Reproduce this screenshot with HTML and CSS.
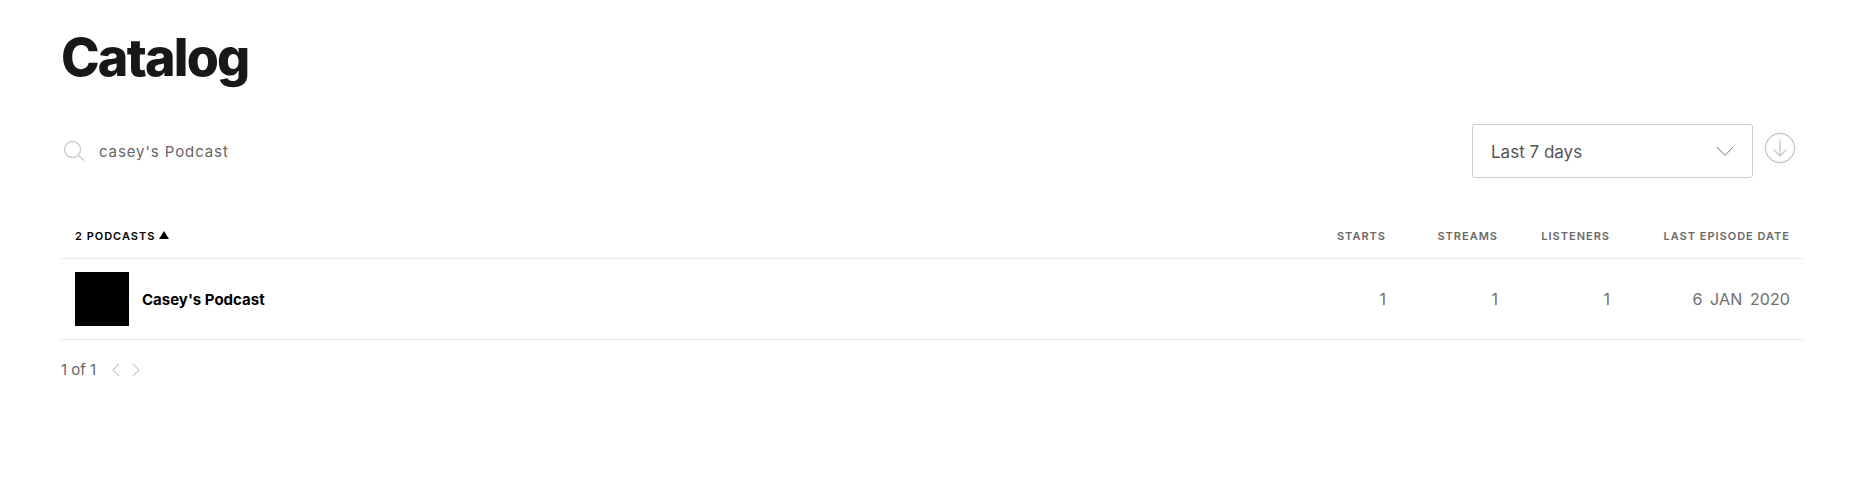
FILE: index.html
```html
<!DOCTYPE html>
<html lang="en">
<head>
    <meta charset="UTF-8">
    <title>Catalog</title>
    <link rel="stylesheet" href="styles.css">
</head>
<body>

<div class="pagina">
    <h1 class="titulo">Catalog</h1>

    <div class="filtros">
        <div class="buscador">
            <svg class="icono-buscar" width="22" height="22" viewBox="0 0 22 22" fill="none" stroke="#ccc" stroke-width="1.4">
                <circle cx="9.5" cy="9.5" r="8"/>
                <path d="M15.2 15.2 L21 20.5"/>
            </svg>
            <span class="busqueda">casey's Podcast</span>
        </div>
        <div class="acciones">
            <div class="selector">
                <span>Last 7 days</span>
                <svg width="18" height="10" viewBox="0 0 18 10" fill="none" stroke="#777" stroke-width="1">
                    <path d="M1 1 L9 9.5 L17 1"/>
                </svg>
            </div>
            <svg class="descarga" width="32" height="32" viewBox="0 0 32 32" fill="none" stroke="#ccc" stroke-width="1.4">
                <circle cx="16" cy="16" r="14.5"/>
                <path d="M16 7.5 V23.5 M9.5 17.5 L16 24 L22.5 17.5"/>
            </svg>
        </div>
    </div>

    <div class="fila cabecera">
        <div class="col-nombre orden">2 Podcasts <span class="flecha"></span></div>
        <div class="col-num">Starts</div>
        <div class="col-num">Streams</div>
        <div class="col-num">Listeners</div>
        <div class="col-fecha">Last Episode Date</div>
    </div>

    <div class="fila podcast">
        <div class="col-nombre">
            <div class="portada"></div>
            <span class="nombre">Casey's Podcast</span>
        </div>
        <div class="col-num">1</div>
        <div class="col-num">1</div>
        <div class="col-num">1</div>
        <div class="col-fecha">6 Jan 2020</div>
    </div>

    <div class="paginacion">
        <span>1 of 1</span>
        <svg width="30" height="14" viewBox="0 0 30 14" fill="none" stroke="#ccc" stroke-width="1.2">
            <path d="M8 1 L2 7 L8 13 M22 1 L28 7 L22 13"/>
        </svg>
    </div>
</div>

</body>
</html>
```

FILE: styles.css
```css
body {
    font-family: Inter, Arial, sans-serif;
    margin: 0;
    background-color: white;
}
.pagina {
    padding: 25px 53px 0 61px;
}
.titulo {
    margin: 0;
    font-size: 52px;
    line-height: 66px;
    font-weight: 800;
    letter-spacing: -1.8px;
    color: #181818;
}
.filtros {
    display: flex;
    justify-content: space-between;
    align-items: center;
    margin-top: 33px;
    padding-right: 7px;
}
.buscador {
    display: flex;
    align-items: center;
    gap: 14px;
    padding-left: 2px;
}
.busqueda {
    font-size: 15px;
    letter-spacing: 0.9px;
    color: #666;
    padding-top: 1px;
}
.acciones {
    display: flex;
    align-items: flex-start;
    gap: 11px;
}
.selector {
    display: flex;
    justify-content: space-between;
    align-items: center;
    box-sizing: border-box;
    width: 281px;
    height: 54px;
    padding: 0 18px;
    border: 1px solid #ccc;
    border-radius: 3px;
    font-size: 17px;
    color: #555;
}
.selector span {
    padding-top: 1px;
}
.descarga {
    margin-top: 8px;
}
.fila {
    display: grid;
    grid-template-columns: 1fr 112px 112px 112px 180px;
    align-items: center;
    padding: 0 13px 0 14px;
}
.cabecera {
    height: 48px;
    margin-top: 33px;
    padding-top: 3px;
    box-sizing: border-box;
    border-bottom: 1px solid #eaeaea;
    font-size: 11px;
    font-weight: 600;
    letter-spacing: 1px;
    text-transform: uppercase;
    color: #6a6a6a;
}
.podcast {
    height: 81px;
    box-sizing: border-box;
    border-bottom: 1px solid #e6e6e6;
    font-size: 16px;
    color: #6e6e6e;
}
.col-num, .col-fecha {
    text-align: right;
}
.podcast .col-fecha {
    text-transform: uppercase;
    word-spacing: 3px;
    letter-spacing: 0.1px;
}
.col-nombre {
    display: flex;
    align-items: center;
    gap: 13px;
}
.orden {
    gap: 4px;
    color: black;
}
.flecha {
    width: 0;
    height: 0;
    margin-top: -3px;
    border-left: 5px solid transparent;
    border-right: 5px solid transparent;
    border-bottom: 8px solid black;
}
.portada {
    width: 54px;
    height: 54px;
    background-color: black;
}
.nombre {
    font-size: 15px;
    font-weight: 700;
    color: black;
}
.paginacion {
    display: flex;
    align-items: center;
    gap: 15px;
    margin-top: 20px;
    font-size: 15px;
    color: #666;
}
```
